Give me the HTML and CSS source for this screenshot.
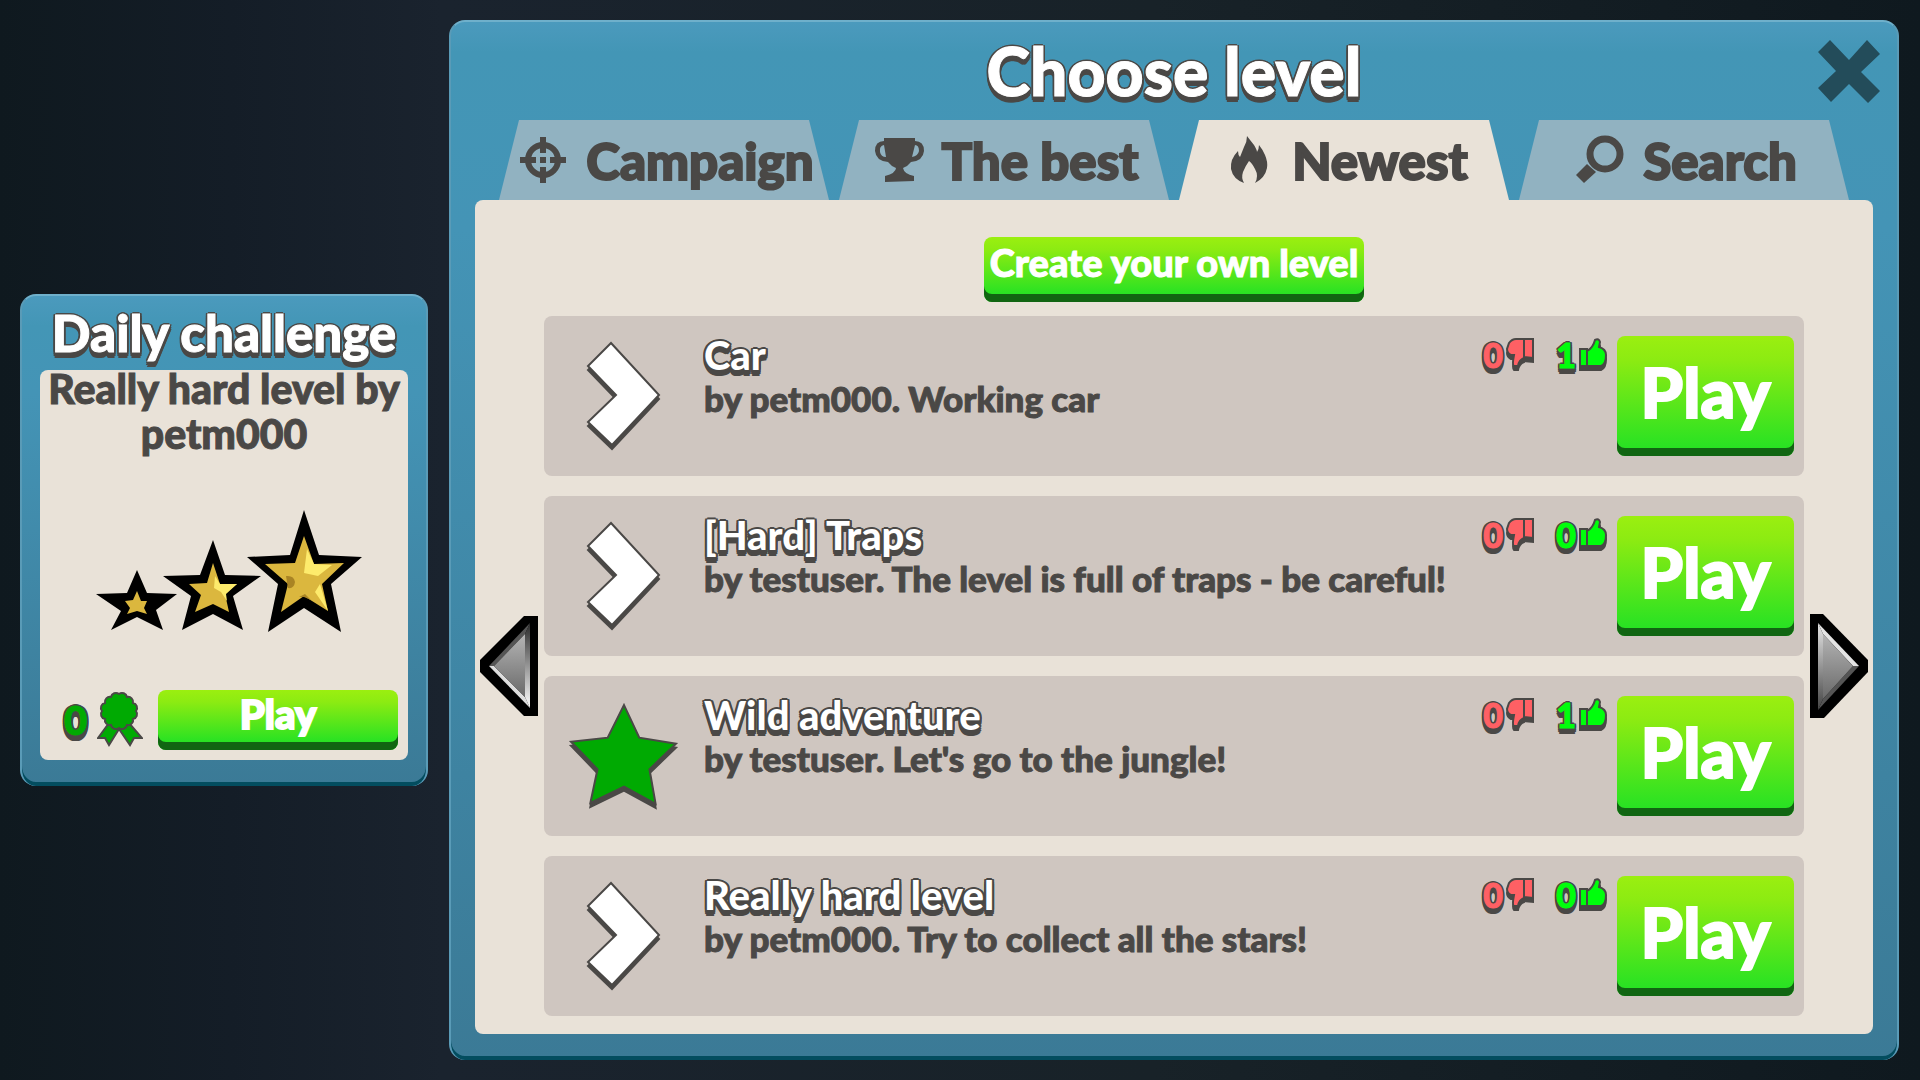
FILE: index.html
```html
<!DOCTYPE html>
<html lang="en">
<head>
<meta charset="utf-8">
<meta name="viewport" content="width=device-width, initial-scale=1">
<title>Choose level</title>
<link rel="stylesheet" href="styles.css">
</head>
<body>
<svg class="sprite" width="0" height="0" aria-hidden="true">
  <defs>
    <linearGradient id="steel" x1="0" y1="0" x2="0" y2="1"><stop offset="0" stop-color="#b4b4b4"/><stop offset="1" stop-color="#6a6a6a"/></linearGradient>
    <linearGradient id="edge-rise" x1="0" y1="0" x2="0" y2="1"><stop offset="0" stop-color="#2a2a2a"/><stop offset="1" stop-color="#fff"/></linearGradient>
    <linearGradient id="edge-fall" x1="0" y1="0" x2="0" y2="1"><stop offset="0" stop-color="#e6e6e6"/><stop offset="1" stop-color="#444"/></linearGradient>
    <symbol id="i-next" viewBox="0 0 76 110"><path d="M25 2 73 54 26 104 2 81 30 54 2 25Z"/></symbol>
    <symbol id="i-star" viewBox="0 0 110 108"><path d="M55 4 70 36 106 42 80 67 86 101 55 84 22 100 29 67 3 40 39 36Z"/></symbol>
    <symbol id="i-down" viewBox="0 0 28 34"><path d="M3 5Q6 1 10 1H18V20Q13 22 12 28H8Q6 27 8 17H5Q1 15 1 11Z M18 1H27V20L18 19Z"/></symbol>
    <symbol id="i-up" viewBox="0 0 28 34"><path d="M1 11H8V28H1Z M8 13Q14 10 16 2 20 0 21 4L20 9Q27 11 27 17 27 26 22 28H8Z"/></symbol>
  </defs>
</svg>
<main class="screen">
  <aside class="window daily">
    <h2 class="daily-title outlined">Daily challenge</h2>
    <div class="paper daily-body">
      <p class="daily-name">Really hard level by petm000</p>
      <svg class="difficulty" viewBox="0 0 266 122" role="img" aria-label="Three stars">
        <path d="M41 60 51 83 81 84 60 100 67 120 41 107 15 120 25 101 0 84 31 83Z"/>
        <path fill="#dbb73e" d="M41 81 45 91 51 91 48 98 51 104 41 101 31 104 34 98 29 91 37 90Z"/>
        <path d="M117 30 129 65 165 66 137 86 147 120 117 104 86 120 95 86 67 66 104 65Z"/>
        <path fill="#dbb73e" d="M117 53 124 74 141 74 129 84 133 102 117 94 99 102 105 85 93 74 111 73Z"/>
        <path fill="#fdeb6c" d="M119 66 124 74 141 74 130 84 131 91 125 82 118 78Z"/>
        <path d="M208 0 223 45 266 47 235 74 245 122 208 98 172 122 182 74 151 47 194 45Z"/>
        <path fill="#dbb73e" d="M208 26 218 54 248 53 226 74 232 101 208 86 185 102 192 74 169 54 199 53Z"/>
        <path fill="#fdeb6c" d="M211 39 218 54 236 55 222 66 208 63ZM224 74 232 101 219 82Z"/>
        <path fill="#a98424" d="M190 66Q198 65 199 72 198 79 192 78ZM203 87 209 84 215 90 208 87Z"/>
      </svg>
      <div class="daily-footer">
        <span class="medals outlined">0</span>
        <svg class="medal" viewBox="0 0 46 60" role="img" aria-label="medals"><path d="M12 33 1 48H8L12 55 22 39 33 55 37 48H45L32 33Z"/><path d="M39 21a5 5 0 0 1-3 8a5 5 0 0 1-6 6a5 5 0 0 1-8 3a5 5 0 0 1-8-3a5 5 0 0 1-6-6a5 5 0 0 1-3-8a5 5 0 0 1 3-8a5 5 0 0 1 6-6a5 5 0 0 1 8-3a5 5 0 0 1 8 3a5 5 0 0 1 6 6a5 5 0 0 1 3 8Z"/></svg>
        <button class="green daily-play" type="button">Play</button>
      </div>
    </div>
  </aside>

  <section class="window chooser">
    <header class="chooser-head">
      <h1 class="chooser-title outlined">Choose level</h1>
      <button class="close" type="button" aria-label="Close"><svg viewBox="0 0 62 62"><path d="M12 0 31 20 49 0 62 14 43 32 62 51 50 63 31 44 13 62 0 48 18 31 0 12Z"/></svg></button>
    </header>
    <nav class="tabs" aria-label="Level lists">
      <button class="tab" type="button">
        <svg class="tab-icon" viewBox="0 0 50 50"><g fill="none" stroke="currentColor" stroke-width="6"><circle cx="25" cy="25" r="15"/><path d="M25 2V18M25 32V48M2 25H18M32 25H48M22 25H28"/></g></svg>Campaign</button>
      <button class="tab" type="button">
        <svg class="tab-icon" viewBox="0 0 50 50"><path d="M10 3H41V6Q50 6 50 16 49 26 37 27 34 31 29 33 30 39 40 41V46L11 47V41Q22 38 22 33 17 31 14 27 2 26 1 16 1 6 10 6ZM10 10Q5 11 6 17 7 22 12 22ZM41 10 38 22Q44 21 45 16 45 10 41 10Z" fill="currentColor" fill-rule="evenodd"/></svg>The best</button>
      <button class="tab active" type="button" aria-current="page">
        <svg class="tab-icon" viewBox="0 0 50 50"><path d="M23 1Q26 5 30 10 33 15 33 17 35 14 35 10 39 15 41 20 44 27 43 33 41 43 31 48 35 41 31 34 28 28 25 26 22 30 19 37 17 43 20 48 9 44 7 34 6 24 14 16 14 20 16 22 18 17 20 12 23 7 23 1Z" fill="currentColor"/></svg>Newest</button>
      <button class="tab" type="button">
        <svg class="tab-icon" viewBox="0 0 50 50"><circle cx="30" cy="19" r="15" fill="none" stroke="currentColor" stroke-width="7"/><path d="M12 29 21 37 9 48 1 40Z" fill="currentColor"/></svg>Search</button>
    </nav>
    <div class="paper chooser-body">
      <button class="green create" type="button">Create your own level</button>
      <div class="browser">
        <button class="page" type="button" aria-label="Previous page"><svg viewBox="0 0 58 104"><path d="M44 2H58V102H44L0 58V46Z"/><path fill="#555" d="M50 9 45 20 14 52H9Z"/><path fill="#ddd" d="M50 94 45 83 14 52H9Z"/><path fill="url(#edge-rise)" d="M50 9V94L45 83V20Z"/><path fill="url(#steel)" d="M45 20V83L14 52Z"/></svg></button>
        <ul class="levels">
          <li class="level">
            <svg class="status" role="img" aria-label="Not played"><use href="#i-next"/></svg>
            <div class="info"><h3 class="name outlined">Car</h3><p class="about">by petm000. Working car</p></div>
            <span class="vote bad outlined">0<svg class="thumb"><use href="#i-down"/></svg></span>
            <span class="vote good outlined">1<svg class="thumb"><use href="#i-up"/></svg></span>
            <button class="green play" type="button">Play</button>
          </li>
          <li class="level">
            <svg class="status" role="img" aria-label="Not played"><use href="#i-next"/></svg>
            <div class="info"><h3 class="name outlined">[Hard] Traps</h3><p class="about">by testuser. The level is full of traps - be careful!</p></div>
            <span class="vote bad outlined">0<svg class="thumb"><use href="#i-down"/></svg></span>
            <span class="vote good outlined">0<svg class="thumb"><use href="#i-up"/></svg></span>
            <button class="green play" type="button">Play</button>
          </li>
          <li class="level">
            <svg class="status won" role="img" aria-label="Completed"><use href="#i-star"/></svg>
            <div class="info"><h3 class="name outlined">Wild adventure</h3><p class="about">by testuser. Let's go to the jungle!</p></div>
            <span class="vote bad outlined">0<svg class="thumb"><use href="#i-down"/></svg></span>
            <span class="vote good outlined">1<svg class="thumb"><use href="#i-up"/></svg></span>
            <button class="green play" type="button">Play</button>
          </li>
          <li class="level">
            <svg class="status" role="img" aria-label="Not played"><use href="#i-next"/></svg>
            <div class="info"><h3 class="name outlined">Really hard level</h3><p class="about">by petm000. Try to collect all the stars!</p></div>
            <span class="vote bad outlined">0<svg class="thumb"><use href="#i-down"/></svg></span>
            <span class="vote good outlined">0<svg class="thumb"><use href="#i-up"/></svg></span>
            <button class="green play" type="button">Play</button>
          </li>
        </ul>
        <button class="page" type="button" aria-label="Next page"><svg viewBox="0 0 58 104"><path d="M0 0H13L58 46V58L14 104H0Z"/><path fill="#e4e4e4" d="M8 9 49 52H43L13 20Z"/><path fill="#555" d="M8 96 49 52H43L13 85Z"/><path fill="url(#edge-fall)" d="M8 9V96L13 85V20Z"/><path fill="url(#steel)" d="M13 20V85L43 52Z"/></svg></button>
      </div>
    </div>
  </section>
</main>
</body>
</html>
```
FILE: styles.css
```css
:root {
  --ink: #4a4846;
  --paper: #e9e2d8;
  --card: #cfc6c0;
}

* { box-sizing: border-box; }

body {
  margin: 0;
  color: var(--ink);
  background: linear-gradient(90deg, #0f191f 0%, #141d27 12%, #1a232e 23%, #182228 60%, #0f191f 100%);
  font-family: Lato, "Open Sans", sans-serif;
  font-weight: 900;
  -webkit-text-stroke: 1px currentColor;
}

h1, h2, h3, p, ul { margin: 0; padding: 0; font-weight: inherit; }

button {
  border: 0;
  padding: 0;
  background: none;
  color: inherit;
  font: inherit;
  cursor: pointer;
}

svg { display: block; flex: none; }
.sprite { position: absolute; }

.screen {
  display: flex;
  align-items: center;
  gap: 21px;
  min-height: 100vh;
  padding: 20px 21px 20px 20px;
}

.window {
  border: 2px solid #62a8c6;
  border-bottom: 0;
  border-color: #6fb0cb #5a9bb7;
  border-radius: 16px;
  background: linear-gradient(#4b9abd 0, #4396b6 30px, #4494b6 20%, #3b7a96 100%);
  box-shadow: inset 0 -4px #034d5f;
}

.paper {
  border-radius: 8px;
  background: var(--paper);
}

.outlined {
  color: #fff;
  text-shadow:
    -2px 0 var(--ink), 2px 0 var(--ink), 0 -2px var(--ink),
    -2px -1px var(--ink), 2px -1px var(--ink),
    -2px 2px var(--ink), 2px 2px var(--ink),
    -2px 4px var(--ink), 2px 4px var(--ink),
    -1px 6px var(--ink), 1px 6px var(--ink);
}

.green {
  padding-bottom: 8px;
  border-radius: 8px;
  background: linear-gradient(#9bef10 0, #8ceb12 20%, #28e223 calc(100% - 8px));
  box-shadow: inset 0 -8px #116512;
  color: #fff;
  white-space: nowrap;
  -webkit-text-stroke: 2px currentColor;
}

/* Daily challenge */
.daily {
  flex: 0 0 408px;
  padding: 0 18px 26px;
}

.daily-title {
  font-size: 51px;
  line-height: 74px;
  text-align: center;
  white-space: nowrap;
  -webkit-text-stroke: 1px currentColor;
}

.daily-body {
  display: flex;
  flex-direction: column;
  padding-bottom: 10px;
}

.daily-name {
  margin-top: -4px;
  font-size: 41px;
  line-height: 45px;
  text-align: center;
}

.difficulty { width: 266px; height: 122px; margin: 54px 0 58px 56px; }

.daily-footer {
  display: flex;
  align-items: center;
  gap: 10px;
  height: 60px;
  padding: 0 10px 0 24px;
}

.medals { color: #00aa02; font-size: 40px; -webkit-text-stroke: 1px currentColor; }
.medal {
  width: 46px;
  height: 60px;
  fill: #00aa02;
  stroke: var(--ink);
  stroke-width: 2;
}
.daily-play { width: 240px; height: 60px; margin-left: auto; padding-bottom: 12px; font-size: 40px; }

/* Level chooser */
.chooser {
  flex: 1;
  min-width: 0;
  padding: 0 24px 26px;
}

.chooser-head {
  display: grid;
  grid-template-columns: 1fr auto 1fr;
  align-items: center;
  height: 98px;
  margin: 0 -7px;
}

.chooser-title {
  grid-column: 2;
  font-size: 66px;
  line-height: 80px;
  -webkit-text-stroke: 1px currentColor;
}
.close { justify-self: end; width: 62px; height: 62px; }
.close svg { width: 62px; height: 62px; overflow: visible; fill: #234c5a; }

.tabs {
  display: flex;
  justify-content: center;
  gap: 10px;
}

.tab {
  display: flex;
  flex: 0 1 330px;
  align-items: center;
  justify-content: center;
  gap: 18px;
  height: 80px;
  padding-left: 4px;
  background: #91b2c1;
  clip-path: polygon(20px 0, calc(100% - 20px) 0, 100% 100%, 0 100%);
  font-size: 51px;
  white-space: nowrap;
  -webkit-text-stroke: 2px currentColor;
}
.tab.active { background: var(--paper); }
.tab-icon { width: 50px; height: 50px; }

.chooser-body {
  display: flex;
  flex-direction: column;
  align-items: center;
  gap: 14px;
  padding: 37px 0 18px;
}

.create {
  width: 380px;
  height: 65px;
  padding-bottom: 16px;
  font-size: 38px;
  -webkit-text-stroke: 1px currentColor;
}

.browser {
  display: flex;
  align-items: center;
  align-self: stretch;
  gap: 6px;
  padding: 0 5px;
}

.page { flex: none; width: 58px; height: 104px; }
.page svg { width: 58px; height: 104px; }

.levels {
  display: flex;
  flex: 1;
  flex-direction: column;
  gap: 20px;
  min-width: 0;
  list-style: none;
}

.level {
  display: flex;
  align-items: flex-start;
  min-height: 160px;
  padding: 20px 10px 20px 20px;
  border-radius: 8px;
  background: var(--card);
}

.status {
  width: 120px;
  height: 110px;
  margin: 5px 20px 0 0;
  fill: #fff;
  stroke: var(--ink);
  stroke-width: 2;
  filter: drop-shadow(0 4px 0 var(--ink));
}
.status.won { fill: #00aa02; }

.info { flex: 1; min-width: 0; white-space: nowrap; }
.name { font-size: 40px; line-height: 38px; -webkit-text-stroke: 0; }
.about { font-size: 35px; line-height: 48px; }

.vote {
  display: flex;
  align-items: center;
  justify-content: flex-end;
  gap: 3px;
  width: 73px;
  font-size: 34px;
  line-height: 38px;
  -webkit-text-stroke: 1px currentColor;
}
.bad { color: #ff6064; }
.good { color: #00ff0c; }
.thumb {
  width: 28px;
  height: 34px;
  fill: currentColor;
  stroke: var(--ink);
  stroke-width: 2;
  filter: drop-shadow(0 4px 0 var(--ink));
}

.play { width: 177px; height: 120px; margin-left: 10px; padding-bottom: 10px; font-size: 68px; }
```
